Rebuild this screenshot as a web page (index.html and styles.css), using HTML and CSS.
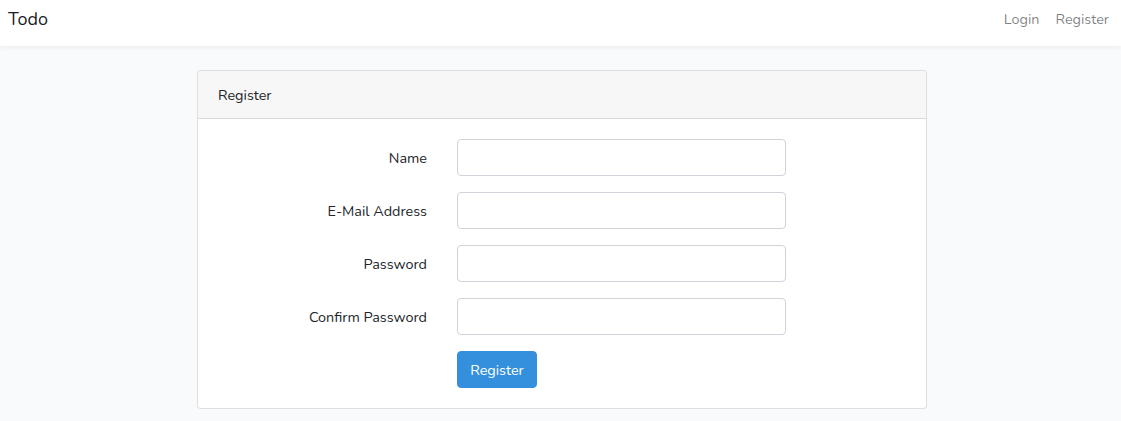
FILE: index.html
```html
<!DOCTYPE html>
<html lang="en">
<head>
<meta charset="utf-8">
<title>Todo</title>
<link rel="stylesheet" href="styles.css">
</head>
<body>
<nav class="navbar">
  <a class="brand" href="#">Todo</a>
  <div class="nav-links">
    <a href="#">Login</a>
    <a href="#">Register</a>
  </div>
</nav>
<main class="main">
  <div class="card">
    <div class="card-header">Register</div>
    <form class="card-body">
      <div class="row">
        <label class="label">Name</label>
        <input class="input" type="text">
      </div>
      <div class="row">
        <label class="label">E-Mail Address</label>
        <input class="input" type="email">
      </div>
      <div class="row">
        <label class="label">Password</label>
        <input class="input" type="password">
      </div>
      <div class="row">
        <label class="label">Confirm Password</label>
        <input class="input" type="password">
      </div>
      <div class="row">
        <span></span>
        <div><button class="btn" type="button">Register</button></div>
      </div>
    </form>
  </div>
</main>
</body>
</html>
```
FILE: styles.css
```css
* { box-sizing: border-box; }
html, body { margin: 0; padding: 0; }
body {
  background: #f8fafc;
  font-family: "Nunito", "Lato", "Open Sans", sans-serif;
  font-size: 14.4px;
  color: #212529;
  height: 421px;
  overflow: hidden;
}
a { text-decoration: none; }
.navbar {
  height: 46px;
  background: #fff;
  box-shadow: 0 2px 4px rgba(0,0,0,.05);
  display: flex;
  align-items: flex-start;
  justify-content: space-between;
  padding: 8px 12px 0 8px;
}
.brand {
  color: rgba(0,0,0,.9);
  font-size: 18px;
  line-height: 22px;
}
.nav-links { display: flex; gap: 16px; }
.nav-links a { color: rgba(0,0,0,.5); line-height: 22px; }
.main {
  display: flex;
  justify-content: flex-start;
  padding: 24px 0 0 197px;
}
.card {
  width: 730px;
  background: #fff;
  border: 1px solid rgba(0,0,0,.125);
  border-radius: 4px;
}
.card-header {
  background: #f7f7f7;
  border-bottom: 1px solid rgba(0,0,0,.125);
  padding: 1px 20px 0;
  height: 48px;
  line-height: 46px;
  border-radius: 3px 3px 0 0;
}
.card-body {
  padding: 20px;
  display: flex;
  flex-direction: column;
  gap: 16px;
}
.row {
  display: grid;
  grid-template-columns: 209px 329px;
  column-gap: 30px;
  align-items: center;
}
.label { text-align: right; padding-top: 1px; }
.input {
  height: 37px;
  border: 1px solid #ced4da;
  border-radius: 4px;
  background: #fff;
  font: inherit;
  padding: 6px 12px;
}
.btn {
  height: 37px;
  width: 80px;
  background: #3490dc;
  border: 1px solid #3490dc;
  border-radius: 4px;
  color: #fff;
  font: inherit;
  padding: 1px 0 0;
}
```
